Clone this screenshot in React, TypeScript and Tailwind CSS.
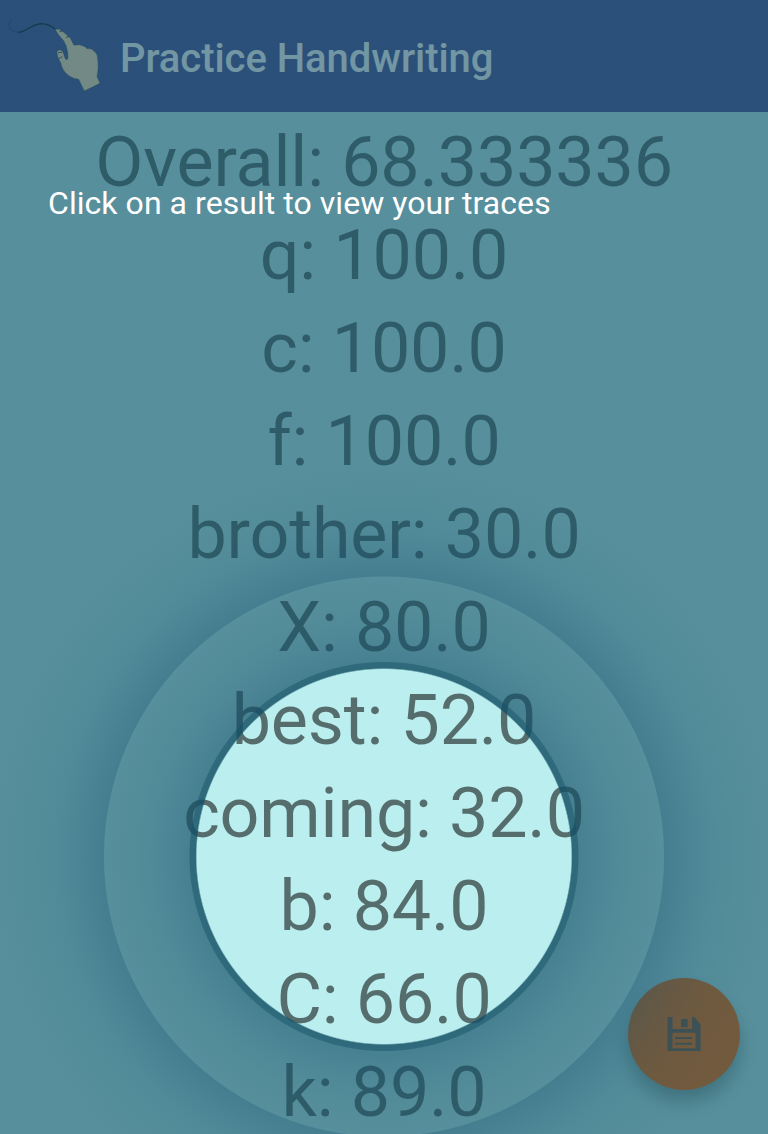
const results = [
  "Overall: 68.333336",
  "q: 100.0",
  "c: 100.0",
  "f: 100.0",
  "brother: 30.0",
  "X: 80.0",
  "best: 52.0",
  "coming: 32.0",
  "b: 84.0",
  "C: 66.0",
  "k: 89.0",
];

function HandLogo() {
  return (
    <svg className="h-[112px] w-[120px] shrink-0" viewBox="0 0 360 336">
      <path d="M36 57C27 68 26 76 30 84C38 99 58 101 76 89" fill="none" stroke="#000" strokeOpacity=".35" strokeWidth="2.500" />
      <path d="M56 97C78 96 92 73 124 71C144 71 156 79 168 89" fill="none" stroke="#00140a" strokeOpacity=".85" strokeWidth="3.500" />
      <path
        d="M165 88L180 88Q184 94 190 96L205 109Q213 114 215 122L222 136Q237 132 248 137Q258 140 261 146Q276 144 282 154Q292 160 293 174Q297 205 291 230L300 250L253 273L236 238Q219 236 209 229Q193 217 188 206Q184 198 182 188Q172 175 170 157Q172 149 180 149Q189 151 190 159L195 174Q200 184 204 174Q204 155 199 139L191 122L176 105Z"
        fill="#ffdeb3"
        stroke="#26382e"
        strokeOpacity=".7"
        strokeWidth="1.500"
      />
      <path d="M178 95L187 92M198 113L207 109M173 160Q179 154 186 158M176 176L187 170" fill="none" stroke="#000" strokeOpacity=".8" strokeWidth="2.500" />
    </svg>
  );
}

function SaveIcon() {
  return (
    <svg className="size-[34px]" viewBox="0 0 34 34">
      <path
        fillRule="evenodd"
        fill="#81533a"
        d="M.5 0H5.500V12H25V0H27.500L33.700 7.500V34H.5ZM5.500 15.700V31.200H28.500V15.700Z"
      />
      <path fill="#81533a" d="M14 2H20.700V10.300H14ZM8 20H25.300V22H8ZM8 25.700H25.300V27.700H8Z" />
    </svg>
  );
}

export default function App() {
  return (
    <div className="relative flex h-[1134px] w-[768px] flex-col overflow-hidden bg-[#bbeeee] font-[Roboto,sans-serif]">
      <header className="flex h-[112px] shrink-0 items-center bg-[#4d4f98]">
        <HandLogo />
        <h1 className="mt-[5px] text-[40px] leading-[47px] font-medium tracking-[-0.05px] text-white">Practice Handwriting</h1>
      </header>
      <ul className="mt-[4px] flex flex-col items-center text-[70px] leading-[93px] tracking-[-0.17px] text-black/54">
        {results.map((r) => (
          <li key={r} className="h-[93px] whitespace-pre">{r}</li>
        ))}
      </ul>

      <button className="absolute top-[978px] left-[628px] flex size-[112px] items-center justify-center rounded-full bg-[#ff6903] shadow-[0_12px_18px_rgba(0,0,0,0.3)]">
        <SaveIcon />
      </button>

      <div className="absolute inset-0 bg-[radial-gradient(circle_at_384px_856.5px,transparent_187px,rgb(20_80_101/.84)_188.5px,rgb(20_80_103/.84)_194px,rgb(20_80_103/.695)_195px,rgb(20_80_103/.655)_220px,rgb(20_80_101/.62)_248px,rgb(20_80_101/.6)_279.5px,rgb(20_80_105/.71)_280.5px,rgb(20_80_103/.67)_303px,rgb(20_80_103/.64)_325px,rgb(20_80_101/.615)_352px,rgb(20_80_101/.6)_390px)]">
        <p className="mt-[184px] ml-[48px] text-[32px] leading-[38px] tracking-[0.05px] text-white">Click on a result to view your traces</p>
      </div>
    </div>
  );
}
